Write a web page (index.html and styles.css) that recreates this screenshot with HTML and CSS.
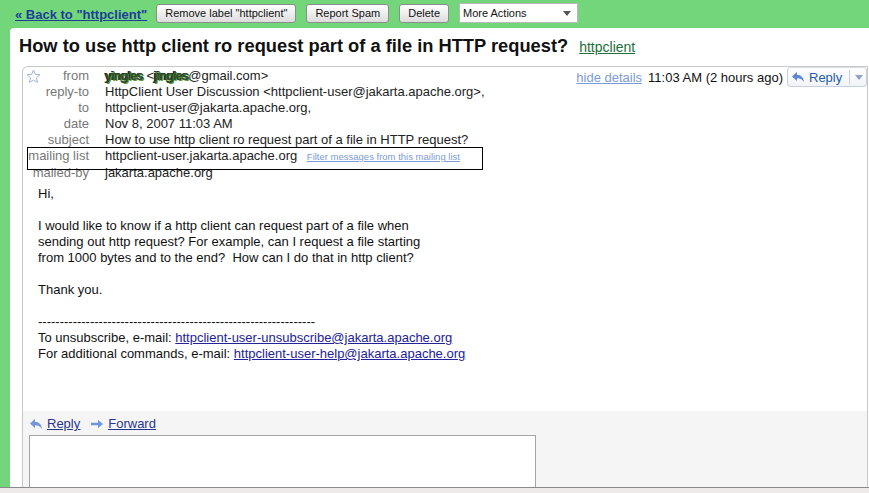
FILE: index.html
```html
<!DOCTYPE html>
<html lang="en">
<head>
  <meta charset="UTF-8">
  <title>How to use http client ro request part of a file in HTTP request?</title>
  <link rel="stylesheet" href="styles.css">
</head>
<body>

  <div class="page">
    <div class="toolbar">
      <a class="back" href="#">&laquo; Back to "httpclient"</a>
      <button class="btn">Remove label "httpclient"</button>
      <button class="btn">Report Spam</button>
      <button class="btn">Delete</button>
      <div class="select">
        <span>More Actions</span>
        <span class="select-arrow"></span>
      </div>
    </div>

    <div class="panel">
      <div class="subject-bar">
        <h1>How to use http client ro request part of a file in HTTP request?</h1>
        <a class="label" href="#">httpclient</a>
      </div>

      <div class="msg">
        <div class="msg-head">
          <div class="fields">
            <div class="key first">
              <svg class="star" width="15" height="15" viewBox="0 0 15 15"><polygon points="7.5,1 9.3,5.4 14,5.7 10.4,8.8 11.6,13.5 7.5,11 3.4,13.5 4.6,8.8 1,5.7 5.7,5.4" fill="none" stroke="#9fb7da" stroke-width="1"/></svg>
              <span>from</span>
            </div>
            <div class="val"><span class="scrawl">yingles</span> &lt;<span class="scrawl">jingles</span>@gmail.com&gt;</div>
            <div class="key">reply-to</div>
            <div class="val">HttpClient User Discussion &lt;httpclient-user@jakarta.apache.org&gt;,</div>
            <div class="key">to</div>
            <div class="val">httpclient-user@jakarta.apache.org,</div>
            <div class="key">date</div>
            <div class="val">Nov 8, 2007 11:03 AM</div>
            <div class="key">subject</div>
            <div class="val">How to use http client ro request part of a file in HTTP request?</div>
            <div class="key">mailing list</div>
            <div class="val">httpclient-user.jakarta.apache.org <a class="filter" href="#">Filter messages from this mailing list</a></div>
            <div class="key">mailed-by</div>
            <div class="val">jakarta.apache.org</div>
          </div>

          <div class="meta">
            <a class="hide" href="#">hide details</a>
            <span class="time">11:03 AM (2 hours ago)</span>
            <div class="reply-btn">
              <svg width="14" height="12" viewBox="0 0 14 12"><path d="M6 1 L1 5.5 L6 10 V7.2 C9 7.2 11 8.2 13 11 C12.6 6.6 10 4 6 3.8 Z" fill="#5f86d3"/></svg>
              <span>Reply</span>
              <span class="sep"></span>
              <span class="drop"></span>
            </div>
          </div>
        </div>

        <div class="msg-body">
          Hi,<br>
          <br>
          I would like to know if a http client can request part of a file when<br>
          sending out http request? For example, can I request a file starting<br>
          from 1000 bytes and to the end?&nbsp; How can I do that in http client?<br>
          <br>
          Thank you.<br>
          <br>
          ----------------------------------------------------------------<br>
          To unsubscribe, e-mail: <a href="#">httpclient-user-unsubscribe@jakarta.apache.org</a><br>
          For additional commands, e-mail: <a href="#">httpclient-user-help@jakarta.apache.org</a>
        </div>

        <div class="msg-foot">
          <div class="actions">
            <a href="#">
              <svg width="14" height="12" viewBox="0 0 14 12"><path d="M6 1 L1 5.5 L6 10 V7.2 C9 7.2 11 8.2 13 11 C12.6 6.6 10 4 6 3.8 Z" fill="#7196dc"/></svg>
              <span>Reply</span>
            </a>
            <a href="#">
              <svg width="14" height="10" viewBox="0 0 14 10"><path d="M1 3.8 H8 V1 L13 5 L8 9 V6.2 H1 Z" fill="#7196dc"/></svg>
              <span>Forward</span>
            </a>
          </div>
          <div class="compose"></div>
        </div>
      </div>
    </div>
  </div>

  <div class="statusbar"></div>

  <!-- marker drawn over the screenshot -->
  <div class="annot"></div>

</body>
</html>
```

FILE: styles.css
```css
body {
  margin: 0;
  width: 869px;
  height: 493px;
  overflow: hidden;
  position: relative;
  background-color: #74d67b;
  font-family: "Liberation Sans", Arial, sans-serif;
  font-size: 13px;
  color: #222;
}

a {
  color: #22229b;
}

.page {
  height: 487px;
  display: flex;
  flex-direction: column;
}

/* top bar */
.toolbar {
  height: 28px;
  display: flex;
  align-items: center;
  padding-left: 15px;
}

.back {
  font-weight: bold;
  color: #1c3e98;
  margin-right: 9px;
}

.btn {
  height: 19px;
  margin: 0 10px 2px 0;
  padding: 0 8px;
  font-family: "Liberation Sans", Arial, sans-serif;
  font-size: 11px;
  color: #111;
  background: linear-gradient(#ffffff, #dcdcdc);
  border: 1px solid #8c8c8c;
  border-radius: 3px;
}

.select {
  width: 119px;
  height: 20px;
  margin-bottom: 2px;
  box-sizing: border-box;
  background: #fff;
  border: 1px solid #b8b8b8;
  display: flex;
  align-items: center;
  justify-content: space-between;
  padding: 0 3px 0 3px;
  font-size: 11px;
  color: #111;
}

.select-arrow {
  width: 0;
  height: 0;
  border-left: 4px solid transparent;
  border-right: 4px solid transparent;
  border-top: 5px solid #555;
  margin-right: 3px;
}

/* white area */
.panel {
  flex: 1;
  margin-left: 10px;
  background: #fff;
  border-top-left-radius: 4px;
  display: flex;
  flex-direction: column;
}

.subject-bar {
  height: 38px;
  box-sizing: border-box;
  padding: 7px 0 0 9px;
  display: flex;
  align-items: baseline;
}

h1 {
  margin: 0;
  font-size: 18.3px;
  line-height: 22px;
  color: #111;
}

.label {
  margin-left: 11px;
  font-size: 14px;
  color: #20703a;
}

/* message card */
.msg {
  flex: 1;
  margin: 0 1px 0 12px;
  border: 1px solid #c8c8c8;
  border-bottom: none;
  border-top-left-radius: 6px;
  display: flex;
  flex-direction: column;
}

.msg-head {
  display: flex;
  justify-content: space-between;
  align-items: flex-start;
}

.fields {
  display: grid;
  grid-template-columns: 66px auto;
  column-gap: 16px;
  padding-top: 1px;
  line-height: 16px;
  white-space: nowrap;
}

.key {
  text-align: right;
  color: #777;
}

.key.first {
  display: flex;
  justify-content: space-between;
  align-items: flex-start;
  padding-left: 3px;
}

.star {
  margin-top: 1px;
}

.scrawl {
  font-weight: bold;
  letter-spacing: -1px;
  color: #2d4a2d;
  text-shadow: 1px 1px 0 #5a9a3c, -1px 0 0 #222;
}

.filter {
  margin-left: 6px;
  font-size: 9.5px;
  color: #7c9bd6;
}

.meta {
  display: flex;
  align-items: center;
  white-space: nowrap;
}

.hide {
  color: #7c9bd6;
  margin-right: 6px;
}

.time {
  color: #111;
  margin-right: 4px;
}

.reply-btn {
  width: 80px;
  height: 20px;
  box-sizing: border-box;
  display: flex;
  align-items: center;
  padding-left: 3px;
  border: 1px solid #c6cfdf;
  border-top-color: #d6dce8;
  border-radius: 4px;
  background: linear-gradient(#ffffff, #f1f3f7);
  color: #2a5aa8;
}

.reply-btn span:nth-child(2) {
  margin-left: 4px;
}

.sep {
  width: 1px;
  height: 14px;
  background: #c6cfdf;
  margin-left: 7px;
}

.drop {
  width: 0;
  height: 0;
  border-left: 4px solid transparent;
  border-right: 4px solid transparent;
  border-top: 5px solid #8ca3cf;
  margin-left: 5px;
}

.msg-body {
  flex: 1;
  margin-top: 5px;
  padding-left: 15px;
  line-height: 16px;
  color: #111;
}

.msg-foot {
  height: 76px;
  box-sizing: border-box;
  background: #f5f5f5;
  padding: 5px 0 0 6px;
}

.actions {
  display: flex;
  gap: 10px;
  line-height: 16px;
}

.actions a {
  display: flex;
  align-items: center;
  gap: 4px;
  color: #2a3591;
}

.actions a span {
  text-decoration: underline;
}

.compose {
  width: 507px;
  height: 52px;
  margin-top: 3px;
  box-sizing: border-box;
  background: #fff;
  border: 1px solid #a4a4a4;
  border-bottom: none;
}

.statusbar {
  height: 6px;
  box-sizing: border-box;
  border-top: 1px solid #8a8a8a;
  background: #eeeae9;
}

.annot {
  position: absolute;
  left: 27px;
  top: 147px;
  width: 454px;
  height: 21px;
  border: 1px solid #000;
}
```
